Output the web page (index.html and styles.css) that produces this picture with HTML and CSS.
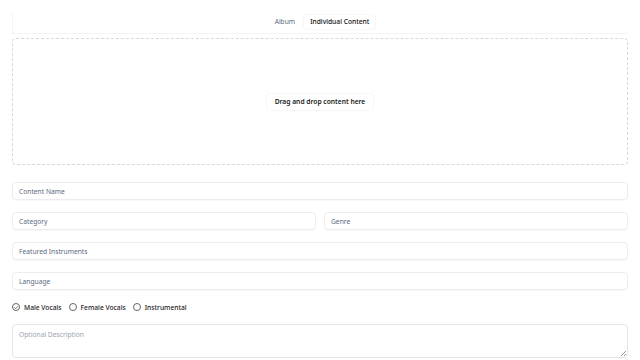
FILE: index.html
```html
<!DOCTYPE html>
<html>
<head>
<meta charset="utf-8">
<link rel="stylesheet" href="styles.css">
</head>
<body>
<div class="page">
  <div class="tabs">
    <div class="tablist">
      <button class="tab">Album</button>
      <button class="tab active">Individual Content</button>
    </div>
  </div>
  <div class="dropzone">
    <div class="dropbtn">Drag and drop content here</div>
  </div>
  <div class="form">
    <div class="field">Content Name</div>
    <div class="row">
      <div class="field">Category</div>
      <div class="field">Genre</div>
    </div>
    <div class="field">Featured Instruments</div>
    <div class="field">Language</div>
    <div class="radios">
      <label class="radio"><span class="circle checked"><svg viewBox="0 0 10 10" width="7" height="7"><path d="M2.5 5.2 L4.3 7 L7.6 3.2" fill="none" stroke="#444" stroke-width="1.1" stroke-linecap="round" stroke-linejoin="round"/></svg></span>Male Vocals</label>
      <label class="radio"><span class="circle"></span>Female Vocals</label>
      <label class="radio"><span class="circle"></span>Instrumental</label>
    </div>
    <div class="textarea">Optional Description<span class="grip"></span></div>
  </div>
</div>
</body>
</html>
```
FILE: styles.css
```css
* { box-sizing: border-box; }
html, body { margin: 0; padding: 0; background: #fff; }
body { font-family: "Noto Sans", "Open Sans", sans-serif; font-size: 6.7px; color: #222; }
.page { padding: 12px 12px 0 12px; display: flex; flex-direction: column; }
.tabs { display: flex; justify-content: center; height: 20px; border-left: 1px solid #f4f4f5; border-bottom: 1px solid #f4f4f5; margin-top: 2px; }
.tablist { display: flex; align-items: center; gap: 0px; height: 16px; }
.tab { font-family: inherit; font-size: 6.7px; border: none; background: transparent; padding: 0 9px; height: 14px; line-height: 14px; color: #5b6b80; border-radius: 3px; }
.tab.active { background: #fff; color: #111; font-weight: 500; box-shadow: 0 0 2px rgba(0,0,0,0.12); padding: 0 6px; }
.dropzone { margin-top: 4px; height: 127px; border: 1px dashed #d8d8dc; border-radius: 4px; display: flex; align-items: center; justify-content: center; }
.dropbtn { background: #fff; padding: 3px 8px; border-radius: 3px; box-shadow: 0 0 2px rgba(0,0,0,0.12); font-weight: 600; color: #222; line-height: 10px; }
.form { margin-top: 17px; display: flex; flex-direction: column; gap: 12px; }
.row { display: flex; gap: 8px; }
.row .field { flex: 1; }
.field { height: 18px; border: 1px solid #ededf0; border-radius: 4px; padding: 0 6px; display: flex; align-items: center; color: #5b6b80; box-shadow: 0 1px 1px rgba(0,0,0,0.03); }
.radios { display: flex; align-items: center; gap: 7px; height: 10px; margin-top: 0px; }
.radio { display: flex; align-items: center; gap: 4px; font-weight: 500; color: #222; }
.circle { width: 8px; height: 8px; border: 1px solid #666; border-radius: 50%; display: flex; align-items: center; justify-content: center; }
.circle svg { display: block; }
.textarea { position: relative; height: 34px; margin-top: 0px; border: 1px solid #e4e4e7; border-radius: 4px; padding: 5px 6px; color: #9ca3af; }
.grip { position: absolute; right: 1px; bottom: 1px; width: 5px; height: 5px; background: linear-gradient(135deg, transparent 45%, #999 45%, #999 55%, transparent 55%, transparent 75%, #999 75%, #999 85%, transparent 85%); }
```
